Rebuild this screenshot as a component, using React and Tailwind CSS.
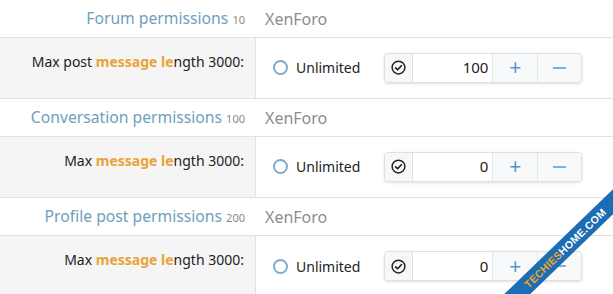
import React from 'react';

const sections = [
  { title: 'Forum permissions', id: '10', pre: 'Max post ', value: '100' },
  { title: 'Conversation permissions', id: '100', pre: 'Max ', value: '0' },
  { title: 'Profile post permissions', id: '200', pre: 'Max ', value: '0' },
];

function CheckCircle() {
  return (
    <svg width="15" height="15" viewBox="0 0 16 16" fill="none" stroke="#222" strokeWidth="1.6">
      <circle cx="8" cy="8" r="6.8" />
      <path d="M4.9 8.3l2.1 2.1 4.1-4.3" strokeWidth="1.8" strokeLinecap="round" strokeLinejoin="round" />
    </svg>
  );
}

function NumberBox({ value }) {
  return (
    <div className="flex h-[30px] w-[198px] rounded-[4px] border border-[#dcdfe3] bg-white shadow-[0_1px_3px_rgba(0,0,0,0.12)] overflow-hidden">
      <div className="w-[28px] flex items-center justify-center border-r border-[#dcdfe3] bg-[#f6f7f8]">
        <CheckCircle />
      </div>
      <div className="w-[79px] flex items-center justify-end pr-[4px] text-[15px] text-[#222]">{value}</div>
      <div className="w-[45px] flex items-center justify-center border-l border-[#e3e6e9] bg-[#f7f9fb] text-[#4f96d2] text-[21px] leading-none">+</div>
      <div className="flex-1 flex items-center justify-center border-l border-[#e3e6e9] bg-[#f7f9fb]">
        <div className="w-[13px] h-[2px] bg-[#7fb0dc]" />
      </div>
    </div>
  );
}

function Section({ s, last }) {
  return (
    <div>
      <div className="flex h-[37px] items-center bg-white">
        <div className="w-[256px] pr-[11px] text-right text-[15.7px] text-[#6f9fbd]">
          {s.title} <span className="text-[11px] text-[#8a8a8a]">{s.id}</span>
        </div>
        <div className="pl-[9px] text-[16px] text-[#8c8c8c]">XenForo</div>
      </div>
      <div className={`flex h-[62px] border-t border-[#e2e2e2] ${last ? '' : 'border-b'}`}>
        <div className="w-[256px] bg-[#f5f5f5] border-r border-[#e2e2e2] pr-[11px] pt-[13px] text-right text-[14px] text-[#222]">
          {s.pre}
          <span className="font-bold text-[#e8a33a]">message le</span>ngth 3000:
        </div>
        <div className="flex-1 flex items-center pl-[17px] pb-[1px]">
          <div className="flex items-center">
            <span className="w-[15px] h-[15px] rounded-full border-2 border-[#7eaacb] bg-white" />
            <span className="ml-[8px] text-[14px] text-[#222]">Unlimited</span>
          </div>
          <div className="ml-[24px]">
            <NumberBox value={s.value} />
          </div>
        </div>
      </div>
    </div>
  );
}

export default function App() {
  return (
    <div className="relative w-[613px] h-[294px] overflow-hidden bg-white" style={{ fontFamily: '"Noto Sans", "Open Sans", sans-serif' }}>
      {sections.map((s, i) => (
        <Section key={s.title} s={s} last={i === sections.length - 1} />
      ))}
      <div className="absolute left-[480px] top-[239px] w-[170px] h-[18px] bg-[#1c6db3] -rotate-[44deg] flex items-center justify-center text-[10.5px] font-bold tracking-[0.3px] leading-none" style={{ fontFamily: '"Liberation Sans", sans-serif' }}>
        <span className="text-[#f2a51c]">TECHIES</span>
        <span className="text-white">HOME.COM</span>
      </div>
    </div>
  );
}
